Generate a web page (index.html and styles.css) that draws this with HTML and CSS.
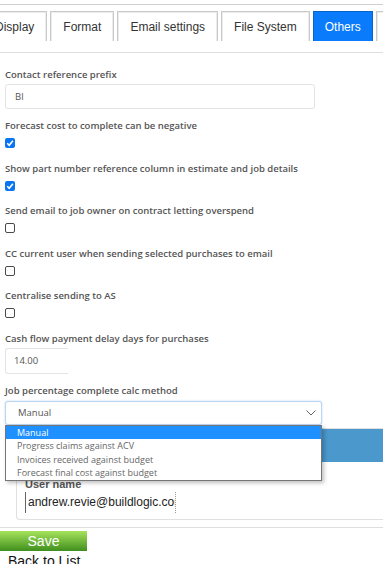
FILE: index.html
```html
<!DOCTYPE html>
<html lang="en">
<head>
    <meta charset="UTF-8">
    <meta name="viewport" content="width=device-width, initial-scale=1.0">
    <title>Settings - Others</title>
    <link rel="stylesheet" href="styles.css">
</head>
<body>
    <div class="page">
        <div class="tabs">
            <a class="tab">Display</a>
            <a class="tab">Format</a>
            <a class="tab">Email settings</a>
            <a class="tab">File System</a>
            <a class="tab active">Others</a>
            <a class="tab tab-more"></a>
        </div>
        <form class="settings">
            <div class="field">
                <label>Contact reference prefix</label>
                <input class="text-input prefix" type="text" value="Bl" readonly>
            </div>
            <div class="field check-field">
                <label>Forecast cost to complete can be negative</label>
                <span class="check checked"><svg width="10" height="10" viewBox="0 0 10 10"><path d="M2.2 5.2 L4.2 7.2 L7.9 2.8" fill="none" stroke="#fff" stroke-width="1.6"/></svg></span>
            </div>
            <div class="field check-field">
                <label>Show part number reference column in estimate and job details</label>
                <span class="check checked"><svg width="10" height="10" viewBox="0 0 10 10"><path d="M2.2 5.2 L4.2 7.2 L7.9 2.8" fill="none" stroke="#fff" stroke-width="1.6"/></svg></span>
            </div>
            <div class="field check-field">
                <label>Send email to job owner on contract letting overspend</label>
                <span class="check"></span>
            </div>
            <div class="field check-field">
                <label>CC current user when sending selected purchases to email</label>
                <span class="check"></span>
            </div>
            <div class="field check-field">
                <label>Centralise sending to AS</label>
                <span class="check"></span>
            </div>
            <div class="field">
                <label>Cash flow payment delay days for purchases</label>
                <input class="text-input days" type="text" value="14.00" readonly>
            </div>
            <div class="field">
                <label>Job percentage complete calc method</label>
                <div class="select-wrap">
                    <div class="select">
                        <span>Manual</span>
                        <svg width="10" height="6" viewBox="0 0 10 6"><path d="M0.5 0.5 L5 5 L9.5 0.5" fill="none" stroke="#666" stroke-width="1"/></svg>
                    </div>
                    <ul class="select-list">
                        <li class="selected">Manual</li>
                        <li>Progress claims against ACV</li>
                        <li>Invoices received against budget</li>
                        <li>Forecast final cost against budget</li>
                    </ul>
                </div>
            </div>
            <div class="panel">
                <div class="panel-heading"></div>
                <div class="panel-body">
                    <label class="user-label">User name</label>
                    <input class="user-input" type="text" value="andrew.revie@buildlogic.com" readonly>
                </div>
            </div>
        </form>
        <div class="actions">
            <button class="save-btn">Save</button>
            <a class="back-link">Back to List</a>
        </div>
    </div>
</body>
</html>
```

FILE: styles.css
```css
body {
    margin: 0;
    font-family: "Liberation Sans", Arial, sans-serif;
    background: #fff;
}
.page {
    width: 383px;
    height: 564px;
    overflow: hidden;
    margin-top: 4px;
    border-top: 1px solid #cfcfcf;
}
.tabs {
    display: flex;
    gap: 3px;
    margin-left: -18px;
    padding-top: 6px;
    padding-bottom: 11px;
    border-bottom: 1px solid #dedede;
    white-space: nowrap;
}
.tab {
    display: block;
    height: 29px;
    line-height: 30px;
    padding: 0 12px;
    font-size: 12px;
    color: #333;
    background: #fff;
    border: 1px solid #c9c9c9;
    border-bottom: none;
    box-shadow: inset 1px 1px 0 #ececec, inset -1px 0 0 #ececec;
    flex-shrink: 0;
}
.tab.active {
    background-color: #0a7bfb;
    border-color: #0b62c9;
    box-shadow: none;
    color: #fff;
    padding: 0 11px;
}
.tab-more {
    width: 40px;
}
.settings {
    padding: 16px 0 0 5px;
}
.field label {
    display: block;
    font-family: "Open Sans", sans-serif;
    font-weight: 600;
    font-size: 9.5px;
    line-height: 12px;
    color: #555;
    margin-bottom: 3px;
}
.field {
    margin-bottom: 11px;
}
.check-field {
    margin-bottom: 14.5px;
}
.check-field label {
    margin-bottom: 6px;
}
.text-input {
    display: block;
    box-sizing: border-box;
    border: 1px solid #e4e4e4;
    border-radius: 3px;
    font-family: "Open Sans", sans-serif;
    font-size: 9.5px;
    color: #555;
    outline: none;
}
.prefix {
    width: 310px;
    height: 25px;
    padding: 0 9px;
}
.days {
    width: 63px;
    height: 26px;
    padding: 0 8px;
    border-right: none;
    border-radius: 3px 0 0 3px;
}
.check {
    display: block;
    box-sizing: border-box;
    width: 10px;
    height: 10px;
    border: 1px solid #4a4a4a;
    border-radius: 2px;
    background: #fff;
}
.check.checked {
    border: none;
    background: #0a75f0;
}
.check svg {
    display: block;
}
.field:has(.select-wrap) label {
    margin-bottom: 4px;
}
.select-wrap {
    position: relative;
    width: 317px;
}
.select {
    box-sizing: border-box;
    height: 24px;
    display: flex;
    align-items: center;
    justify-content: space-between;
    padding: 0 5px 0 12px;
    border: 1px solid #bcd6f2;
    border-radius: 3px;
    box-shadow: 0 0 2px rgba(90, 150, 230, 0.45);
    font-family: "Open Sans", sans-serif;
    font-size: 9.5px;
    color: #555;
    background: #fff;
}
.select-list {
    position: absolute;
    top: 24px;
    left: 0;
    width: 317px;
    box-sizing: border-box;
    margin: 0;
    padding: 0;
    list-style: none;
    background: #fff;
    border: 1px solid #767676;
    box-shadow: 2px 2px 4px rgba(0, 0, 0, 0.25);
    z-index: 2;
}
.select-list li {
    height: 13.5px;
    line-height: 13.5px;
    padding-left: 11px;
    font-family: "Open Sans", sans-serif;
    font-size: 9px;
    color: #666;
}
.select-list li.selected {
    background: #1e90ff;
    color: #fff;
}
.panel {
    margin: -8px 0 0 11px;
    border: 1px solid #e0e0e0;
    border-right: none;
    border-radius: 4px 0 0 4px;
}
.panel-heading {
    height: 33px;
    background: #4a98cc;
}
.panel-body {
    padding: 16px 0 6px 8px;
}
.user-label {
    display: block;
    font-size: 11px;
    font-weight: bold;
    line-height: 12px;
    color: #555;
    margin-bottom: 2px;
}
.user-input {
    display: block;
    box-sizing: border-box;
    width: 151px;
    height: 21px;
    padding: 0 0 0 2px;
    border: none;
    border-left: 1px solid #666;
    border-right: 1px dotted #999;
    font-family: "Liberation Sans", Arial, sans-serif;
    font-size: 12px;
    color: #222;
    outline: none;
    background: #fff;
}
.actions {
    margin-top: 7px;
    border-top: 1px solid #dedede;
    padding-top: 3px;
}
.save-btn {
    display: block;
    width: 87px;
    height: 20px;
    border: none;
    background: linear-gradient(#a6e35c, #3f8f1e);
    color: #fff;
    font-family: "Liberation Sans", Arial, sans-serif;
    font-size: 14px;
    padding: 0;
}
.back-link {
    display: block;
    margin: 2px 0 0 8px;
    font-size: 14px;
    color: #111;
}
```
